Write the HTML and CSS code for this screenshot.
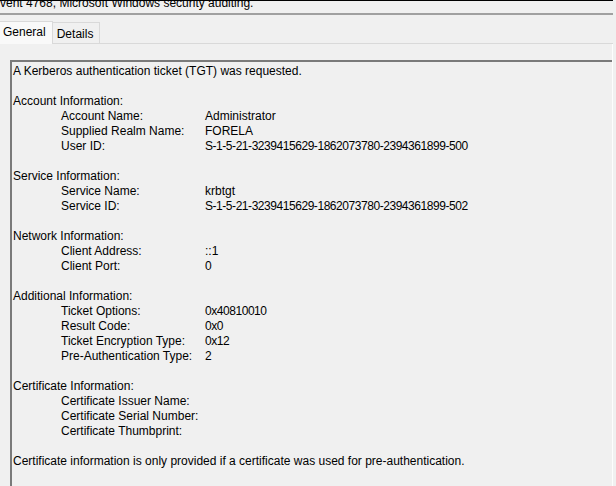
FILE: index.html
```html
<!DOCTYPE html>
<html>
<head>
<meta charset="utf-8">
<link rel="stylesheet" href="styles.css">
</head>
<body>
<div class="window">
  <div class="titlebar"><span class="title">vent 4768, Microsoft Windows security auditing.</span></div>
  <div class="tabs">
    <div class="tab active">General</div>
    <div class="tab">Details</div>
  </div>
  <div class="panel">
    <div class="textbox">
      <div class="line">A Kerberos authentication ticket (TGT) was requested.</div>
      <div class="blank"></div>
      <div class="line">Account Information:</div>
      <div class="row"><span class="label">Account Name:</span><span class="value">Administrator</span></div>
      <div class="row"><span class="label">Supplied Realm Name:</span><span class="value">FORELA</span></div>
      <div class="row"><span class="label">User ID:</span><span class="value num">S-1-5-21-3239415629-1862073780-2394361899-500</span></div>
      <div class="blank"></div>
      <div class="line">Service Information:</div>
      <div class="row"><span class="label">Service Name:</span><span class="value">krbtgt</span></div>
      <div class="row"><span class="label">Service ID:</span><span class="value num">S-1-5-21-3239415629-1862073780-2394361899-502</span></div>
      <div class="blank"></div>
      <div class="line">Network Information:</div>
      <div class="row"><span class="label">Client Address:</span><span class="value">::1</span></div>
      <div class="row"><span class="label">Client Port:</span><span class="value">0</span></div>
      <div class="blank"></div>
      <div class="line">Additional Information:</div>
      <div class="row"><span class="label">Ticket Options:</span><span class="value num">0x40810010</span></div>
      <div class="row"><span class="label">Result Code:</span><span class="value num">0x0</span></div>
      <div class="row"><span class="label">Ticket Encryption Type:</span><span class="value num">0x12</span></div>
      <div class="row"><span class="label">Pre-Authentication Type:</span><span class="value">2</span></div>
      <div class="blank"></div>
      <div class="line">Certificate Information:</div>
      <div class="row"><span class="label">Certificate Issuer Name:</span><span class="value"></span></div>
      <div class="row"><span class="label">Certificate Serial Number:</span><span class="value"></span></div>
      <div class="row"><span class="label">Certificate Thumbprint:</span><span class="value"></span></div>
      <div class="blank"></div>
      <div class="line">Certificate information is only provided if a certificate was used for pre-authentication.</div>
    </div>
  </div>
</div>
</body>
</html>
```

FILE: styles.css
```css
html, body {
  margin: 0;
  padding: 0;
}
body {
  background: #f0f0f0;
  font-family: "Liberation Sans", Arial, sans-serif;
  font-size: 12px;
  color: #000;
  width: 616px;
  height: 486px;
  overflow: hidden;
}
.window {
  width: 616px;
}
.titlebar {
  width: 613px;
  height: 15px;
  box-sizing: border-box;
  border-top: 1px solid #000;
  border-bottom: 2px solid #a0a0a0;
}
.title {
  display: block;
  line-height: 15px;
  margin-top: -5px;
  white-space: nowrap;
}
.tabs {
  width: 613px;
  height: 29px;
  box-sizing: border-box;
  display: flex;
  align-items: flex-end;
  border-bottom: 1px solid #d9d9d9;
}
.tab {
  box-sizing: border-box;
  height: 21px;
  padding: 3px 6px 0 4px;
  line-height: 17px;
  background: #f0f0f0;
  border-top: 1px solid #d9d9d9;
  border-right: 1px solid #d9d9d9;
}
.tab.active {
  height: 23px;
  padding: 2px 6px 0 3px;
  background: #f9f9f9;
  margin-bottom: -1px;
}
.panel {
  width: 613px;
  height: 442px;
  box-sizing: border-box;
  border-right: 1px solid #fdfdfd;
  padding: 16px 0 0 10px;
  overflow: hidden;
}
.textbox {
  border-top: 2px solid #7a7a7a;
  border-left: 2px solid #7a7a7a;
  padding: 2px 0 0 1px;
  height: 500px;
  white-space: nowrap;
}
.line, .row, .blank {
  line-height: 15px;
  height: 15px;
}
.row {
  display: flex;
}
.label {
  width: 192px;
  padding-left: 48px;
  box-sizing: border-box;
  flex-shrink: 0;
}
.num {
  letter-spacing: -0.45px;
}
```
